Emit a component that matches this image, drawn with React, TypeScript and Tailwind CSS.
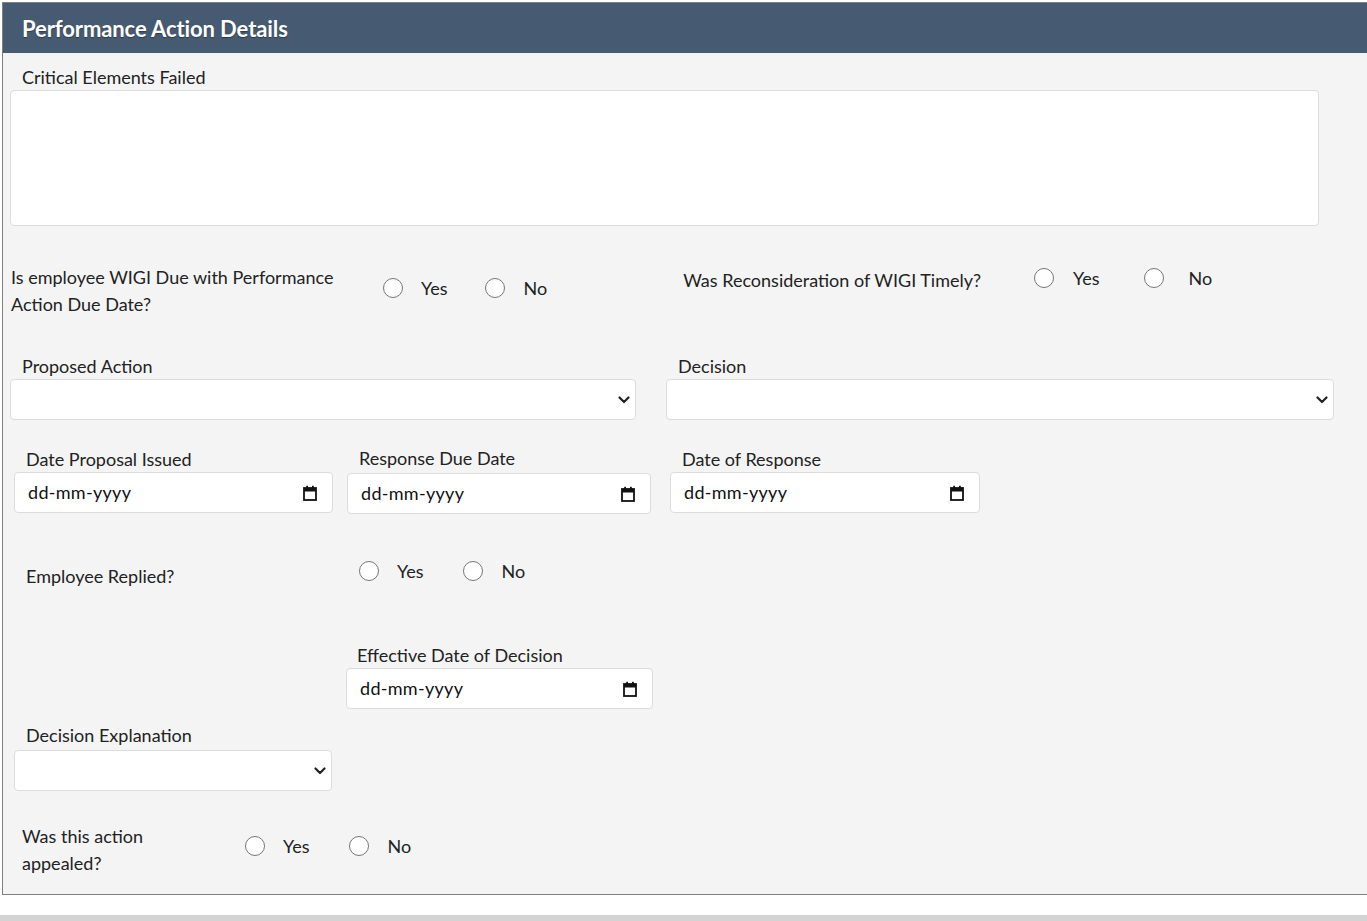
import React from "react";

const font = { fontFamily: "Lato, 'Open Sans', sans-serif" };

function Radio({ label, gap = "ml-[18px]" }: { label: string; gap?: string }) {
  return (
    <div className="flex items-center">
      <span className="inline-block w-[20px] h-[20px] rounded-full border border-[#767676] bg-white" />
      <span className={`${gap} text-[18px] leading-[24px] text-[#222]`}>{label}</span>
    </div>
  );
}

function Chevron() {
  return (
    <svg width="12" height="8" viewBox="0 0 12 8" className="shrink-0">
      <path d="M1.5 1.5 L6 6 L10.5 1.5" fill="none" stroke="#222" strokeWidth="2.2" strokeLinecap="round" strokeLinejoin="round" />
    </svg>
  );
}

function Calendar() {
  return (
    <svg width="14" height="16" viewBox="0 0 14 16" className="shrink-0">
      <rect x="1" y="3" width="12" height="12" fill="none" stroke="#111" strokeWidth="1.8" />
      <rect x="1" y="3" width="12" height="3.5" fill="#111" />
      <rect x="3.2" y="0.8" width="1.8" height="3" fill="#111" />
      <rect x="9" y="0.8" width="1.8" height="3" fill="#111" />
    </svg>
  );
}

function SelectBox({ className }: { className: string }) {
  return (
    <div className={`h-[41px] bg-white border border-[#dcdcdc] rounded-[4px] flex items-center justify-end pr-[5px] ${className}`}>
      <Chevron />
    </div>
  );
}

function DateBox({ className }: { className: string }) {
  return (
    <div className={`h-[41px] bg-white border border-[#dcdcdc] rounded-[4px] flex items-center justify-between pl-[13px] pr-[15px] ${className}`}>
      <span className="text-[18px] text-[#111] tracking-[0.3px]">dd-mm-yyyy</span>
      <Calendar />
    </div>
  );
}

function Label({ children, className = "" }: { children: React.ReactNode; className?: string }) {
  return <div className={`text-[18px] leading-[24px] text-[#222] ${className}`}>{children}</div>;
}

export default function App() {
  return (
    <div className="w-[1367px] h-[921px] bg-white relative overflow-hidden" style={font}>
      <div className="pt-[2px] pl-[2px]">
        <div className="border-l border-t border-b border-[#808080] bg-[#f4f4f4] h-[893px] flex flex-col">
          <div className="h-[50px] bg-[#465a72] flex items-center pl-[19px]">
            <h1
              className="text-white font-bold text-[22px] tracking-[-0.1px]"
              style={{ textShadow: "0 1px 1px rgba(0,0,0,0.35)" }}
            >
              Performance Action Details
            </h1>
          </div>

          {/* Critical elements */}
          <Label className="mt-[12px] ml-[19px]">Critical Elements Failed</Label>
          <div className="mt-[1px] ml-[7px] w-[1309px] h-[136px] bg-white border border-[#dcdcdc] rounded-[4px]" />

          {/* WIGI row */}
          <div className="mt-[38px] flex items-start">
            <div className="ml-[8px] w-[372px] text-[18px] leading-[27px] text-[#222]">
              Is employee WIGI Due with Performance
              <br />
              Action Due Date?
            </div>
            <div className="mt-[12px] flex items-center">
              <Radio label="Yes" />
              <div className="ml-[37px]">
                <Radio label="No" gap="ml-[19px]" />
              </div>
            </div>
            <Label className="mt-[4px] ml-[136px]">Was Reconsideration of WIGI Timely?</Label>
            <div className="mt-[2px] ml-[53px] flex items-center">
              <Radio label="Yes" gap="ml-[19px]" />
              <div className="ml-[44px]">
                <Radio label="No" gap="ml-[25px]" />
              </div>
            </div>
          </div>

          {/* Proposed / Decision */}
          <div className="mt-[36px] flex">
            <div className="ml-[7px] w-[626px] flex flex-col">
              <Label className="ml-[12px]">Proposed Action</Label>
              <SelectBox className="mt-[1px] w-[626px]" />
            </div>
            <div className="ml-[30px] w-[668px] flex flex-col">
              <Label className="ml-[12px]">Decision</Label>
              <SelectBox className="mt-[1px] w-[668px]" />
            </div>
          </div>

          {/* Dates */}
          <div className="mt-[27px] flex">
            <div className="ml-[11px] flex flex-col">
              <Label className="ml-[12px]">Date Proposal Issued</Label>
              <DateBox className="mt-[1px] w-[319px]" />
            </div>
            <div className="ml-[14px] flex flex-col">
              <Label className="ml-[12px] -mt-[1px]">Response Due Date</Label>
              <DateBox className="mt-[3px] w-[304px]" />
            </div>
            <div className="ml-[19px] flex flex-col">
              <Label className="ml-[12px]">Date of Response</Label>
              <DateBox className="mt-[1px] w-[310px]" />
            </div>
          </div>

          {/* Employee replied */}
          <div className="mt-[45px] flex items-start">
            <Label className="mt-[5px] ml-[23px] w-[333px]">Employee Replied?</Label>
            <div className="flex items-center">
              <Radio label="Yes" />
              <div className="ml-[39px]">
                <Radio label="No" gap="ml-[19px]" />
              </div>
            </div>
          </div>

          {/* Effective date */}
          <div className="mt-[55px] ml-[343px] flex flex-col">
            <Label className="ml-[11px]">Effective Date of Decision</Label>
            <DateBox className="mt-[1px] w-[307px]" />
          </div>

          {/* Decision explanation */}
          <div className="mt-[14px] ml-[11px] flex flex-col">
            <Label className="ml-[12px]">Decision Explanation</Label>
            <SelectBox className="mt-[3px] w-[318px]" />
          </div>

          {/* Appealed */}
          <div className="mt-[32px] flex items-start">
            <div className="ml-[19px] w-[223px] text-[18px] leading-[27px] text-[#222]">
              Was this action
              <br />
              appealed?
            </div>
            <div className="mt-[11px] flex items-center">
              <Radio label="Yes" />
              <div className="ml-[39px]">
                <Radio label="No" gap="ml-[19px]" />
              </div>
            </div>
          </div>
        </div>
      </div>
      <div className="mt-[20px] h-[6px] bg-[#d3d3d3]" />
    </div>
  );
}
